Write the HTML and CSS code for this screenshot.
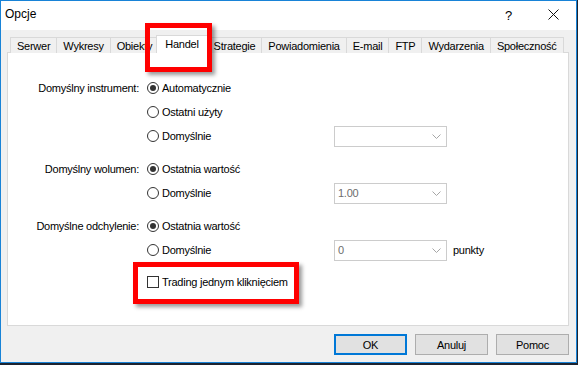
FILE: index.html
```html
<!DOCTYPE html>
<html lang="pl">
<head>
  <meta charset="UTF-8" />
  <title>Opcje</title>
  <link rel="stylesheet" href="styles.css">
</head>
<body>
  <div class="window">
    <div class="titlebar">
      <span class="title">Opcje</span>
      <div class="caption-buttons">
        <span class="cap-btn">?</span>
        <span class="cap-btn">
          <svg width="11" height="11" viewBox="0 0 11 11"><path d="M0.5 0.5L10.5 10.5M10.5 0.5L0.5 10.5" stroke="#111" stroke-width="1" fill="none"/></svg>
        </span>
      </div>
    </div>

    <div class="dialog-body">
      <div class="tabs">
        <div class="tab">Serwer</div>
        <div class="tab">Wykresy</div>
        <div class="tab">Obiekty</div>
        <div class="tab active">Handel</div>
        <div class="tab">Strategie</div>
        <div class="tab">Powiadomienia</div>
        <div class="tab">E-mail</div>
        <div class="tab">FTP</div>
        <div class="tab">Wydarzenia</div>
        <div class="tab">Społeczność</div>
      </div>

      <div class="panel">
        <div class="group">
          <div class="field-label">Domyślny instrument:</div>
          <div class="options">
            <div class="opt-row"><span class="choice"><span class="radio checked"></span>Automatycznie</span></div>
            <div class="opt-row"><span class="choice"><span class="radio"></span>Ostatni użyty</span></div>
            <div class="opt-row">
              <span class="choice"><span class="radio"></span>Domyślnie</span>
              <div class="combo"><span class="combo-value"></span><svg width="9" height="5" viewBox="0 0 9 5"><path d="M0.5 0.5L4.5 4.5L8.5 0.5" stroke="#a6a6a6" fill="none"/></svg></div>
            </div>
          </div>
        </div>

        <div class="group">
          <div class="field-label">Domyślny wolumen:</div>
          <div class="options">
            <div class="opt-row"><span class="choice"><span class="radio checked"></span>Ostatnia wartość</span></div>
            <div class="opt-row">
              <span class="choice"><span class="radio"></span>Domyślnie</span>
              <div class="combo"><span class="combo-value">1.00</span><svg width="9" height="5" viewBox="0 0 9 5"><path d="M0.5 0.5L4.5 4.5L8.5 0.5" stroke="#a6a6a6" fill="none"/></svg></div>
            </div>
          </div>
        </div>

        <div class="group">
          <div class="field-label">Domyślne odchylenie:</div>
          <div class="options">
            <div class="opt-row"><span class="choice"><span class="radio checked"></span>Ostatnia wartość</span></div>
            <div class="opt-row">
              <span class="choice"><span class="radio"></span>Domyślnie</span>
              <div class="combo"><span class="combo-value">0</span><svg width="9" height="5" viewBox="0 0 9 5"><path d="M0.5 0.5L4.5 4.5L8.5 0.5" stroke="#a6a6a6" fill="none"/></svg></div>
              <span class="unit">punkty</span>
            </div>
          </div>
        </div>

        <div class="group group-last">
          <div class="field-label"></div>
          <div class="options">
            <div class="opt-row"><span class="choice"><span class="checkbox"></span>Trading jednym kliknięciem</span></div>
          </div>
        </div>
      </div>

      <div class="footer">
        <button class="btn default">OK</button>
        <button class="btn">Anuluj</button>
        <button class="btn">Pomoc</button>
      </div>
    </div>

    <div class="mark mark-tab"></div>
    <div class="mark mark-option"></div>
  </div>
</body>
</html>
```

FILE: styles.css
```css
* {
  box-sizing: border-box;
}
html, body {
  margin: 0;
  background: #1d2430;
}
body {
  width: 578px;
  height: 365px;
  overflow: hidden;
  font-family: 'Liberation Sans', Arial, sans-serif;
  font-size: 11px;
  letter-spacing: -0.25px;
  color: #000;
}
.window {
  position: relative;
  width: 577px;
  height: 363px;
  background: #f0f0f0;
  border: 1px solid #1883d7;
}
.titlebar {
  display: flex;
  justify-content: space-between;
  height: 29px;
  background: #fff;
}
.title {
  padding: 5px 0 0 4px;
  font-size: 12px;
  letter-spacing: 0;
  line-height: 16px;
}
.caption-buttons {
  display: flex;
}
.cap-btn {
  width: 45px;
  display: flex;
  justify-content: center;
  padding-top: 8px;
  font-size: 13px;
  letter-spacing: 0;
  line-height: 13px;
}
.dialog-body {
  padding: 5px 0 0 6px;
}
.tabs {
  display: flex;
  align-items: flex-end;
  height: 18px;
  padding-left: 3px;
}
.tab {
  height: 16px;
  padding: 1px 6px 0;
  line-height: 15px;
  border: 1px solid #d9d9d9;
  border-bottom: none;
  margin-right: -1px;
  background: #f0f0f0;
  white-space: nowrap;
}
.tab.active {
  position: relative;
  z-index: 1;
  height: 18px;
  padding: 0 8px 2px;
  margin: 0 -1px 0 -2px;
  background: #fff;
  line-height: 16px;
}
.panel {
  width: 562px;
  height: 274px;
  margin-top: -1px;
  padding-top: 23px;
  background: #fff;
  border: 1px solid #d9d9d9;
}
.group {
  display: grid;
  grid-template-columns: 139px 1fr;
  margin-bottom: 9px;
}
.group-last {
  margin-top: -1px;
}
.field-label {
  text-align: right;
  padding-right: 8px;
  line-height: 24px;
  white-space: nowrap;
}
.opt-row {
  display: flex;
  align-items: center;
  height: 24px;
}
.choice {
  display: flex;
  align-items: center;
  width: 187px;
  white-space: nowrap;
}
.radio {
  position: relative;
  width: 12px;
  height: 12px;
  margin-right: 3px;
  border: 1px solid #333;
  border-radius: 50%;
}
.radio.checked::after {
  content: '';
  position: absolute;
  left: 2px;
  top: 2px;
  width: 6px;
  height: 6px;
  border-radius: 50%;
  background: #333;
}
.checkbox {
  width: 12px;
  height: 12px;
  margin-right: 3px;
  border: 1px solid #333;
}
.combo {
  display: flex;
  align-items: center;
  justify-content: space-between;
  width: 113px;
  height: 21px;
  padding: 0 5px 0 3px;
  border: 1px solid #ccc;
  color: #6d6d6d;
}
.unit {
  margin-left: 6px;
}
.footer {
  display: flex;
  justify-content: flex-end;
  gap: 8px;
  width: 562px;
  padding-top: 8px;
}
.btn {
  width: 73px;
  height: 21px;
  padding: 0;
  border: 1px solid #adadad;
  background: #e1e1e1;
  font-family: inherit;
  font-size: 11px;
  letter-spacing: -0.25px;
  color: #000;
}
.btn.default {
  border: 2px solid #0078d7;
}
.mark {
  position: absolute;
  border: 5px solid #f00;
  box-shadow: 3px 3px 4px rgba(0, 0, 0, 0.4);
  z-index: 2;
}
.mark-tab {
  left: 144px;
  top: 22px;
  width: 67px;
  height: 49px;
}
.mark-option {
  left: 132px;
  top: 261px;
  width: 166px;
  height: 42px;
}
```
